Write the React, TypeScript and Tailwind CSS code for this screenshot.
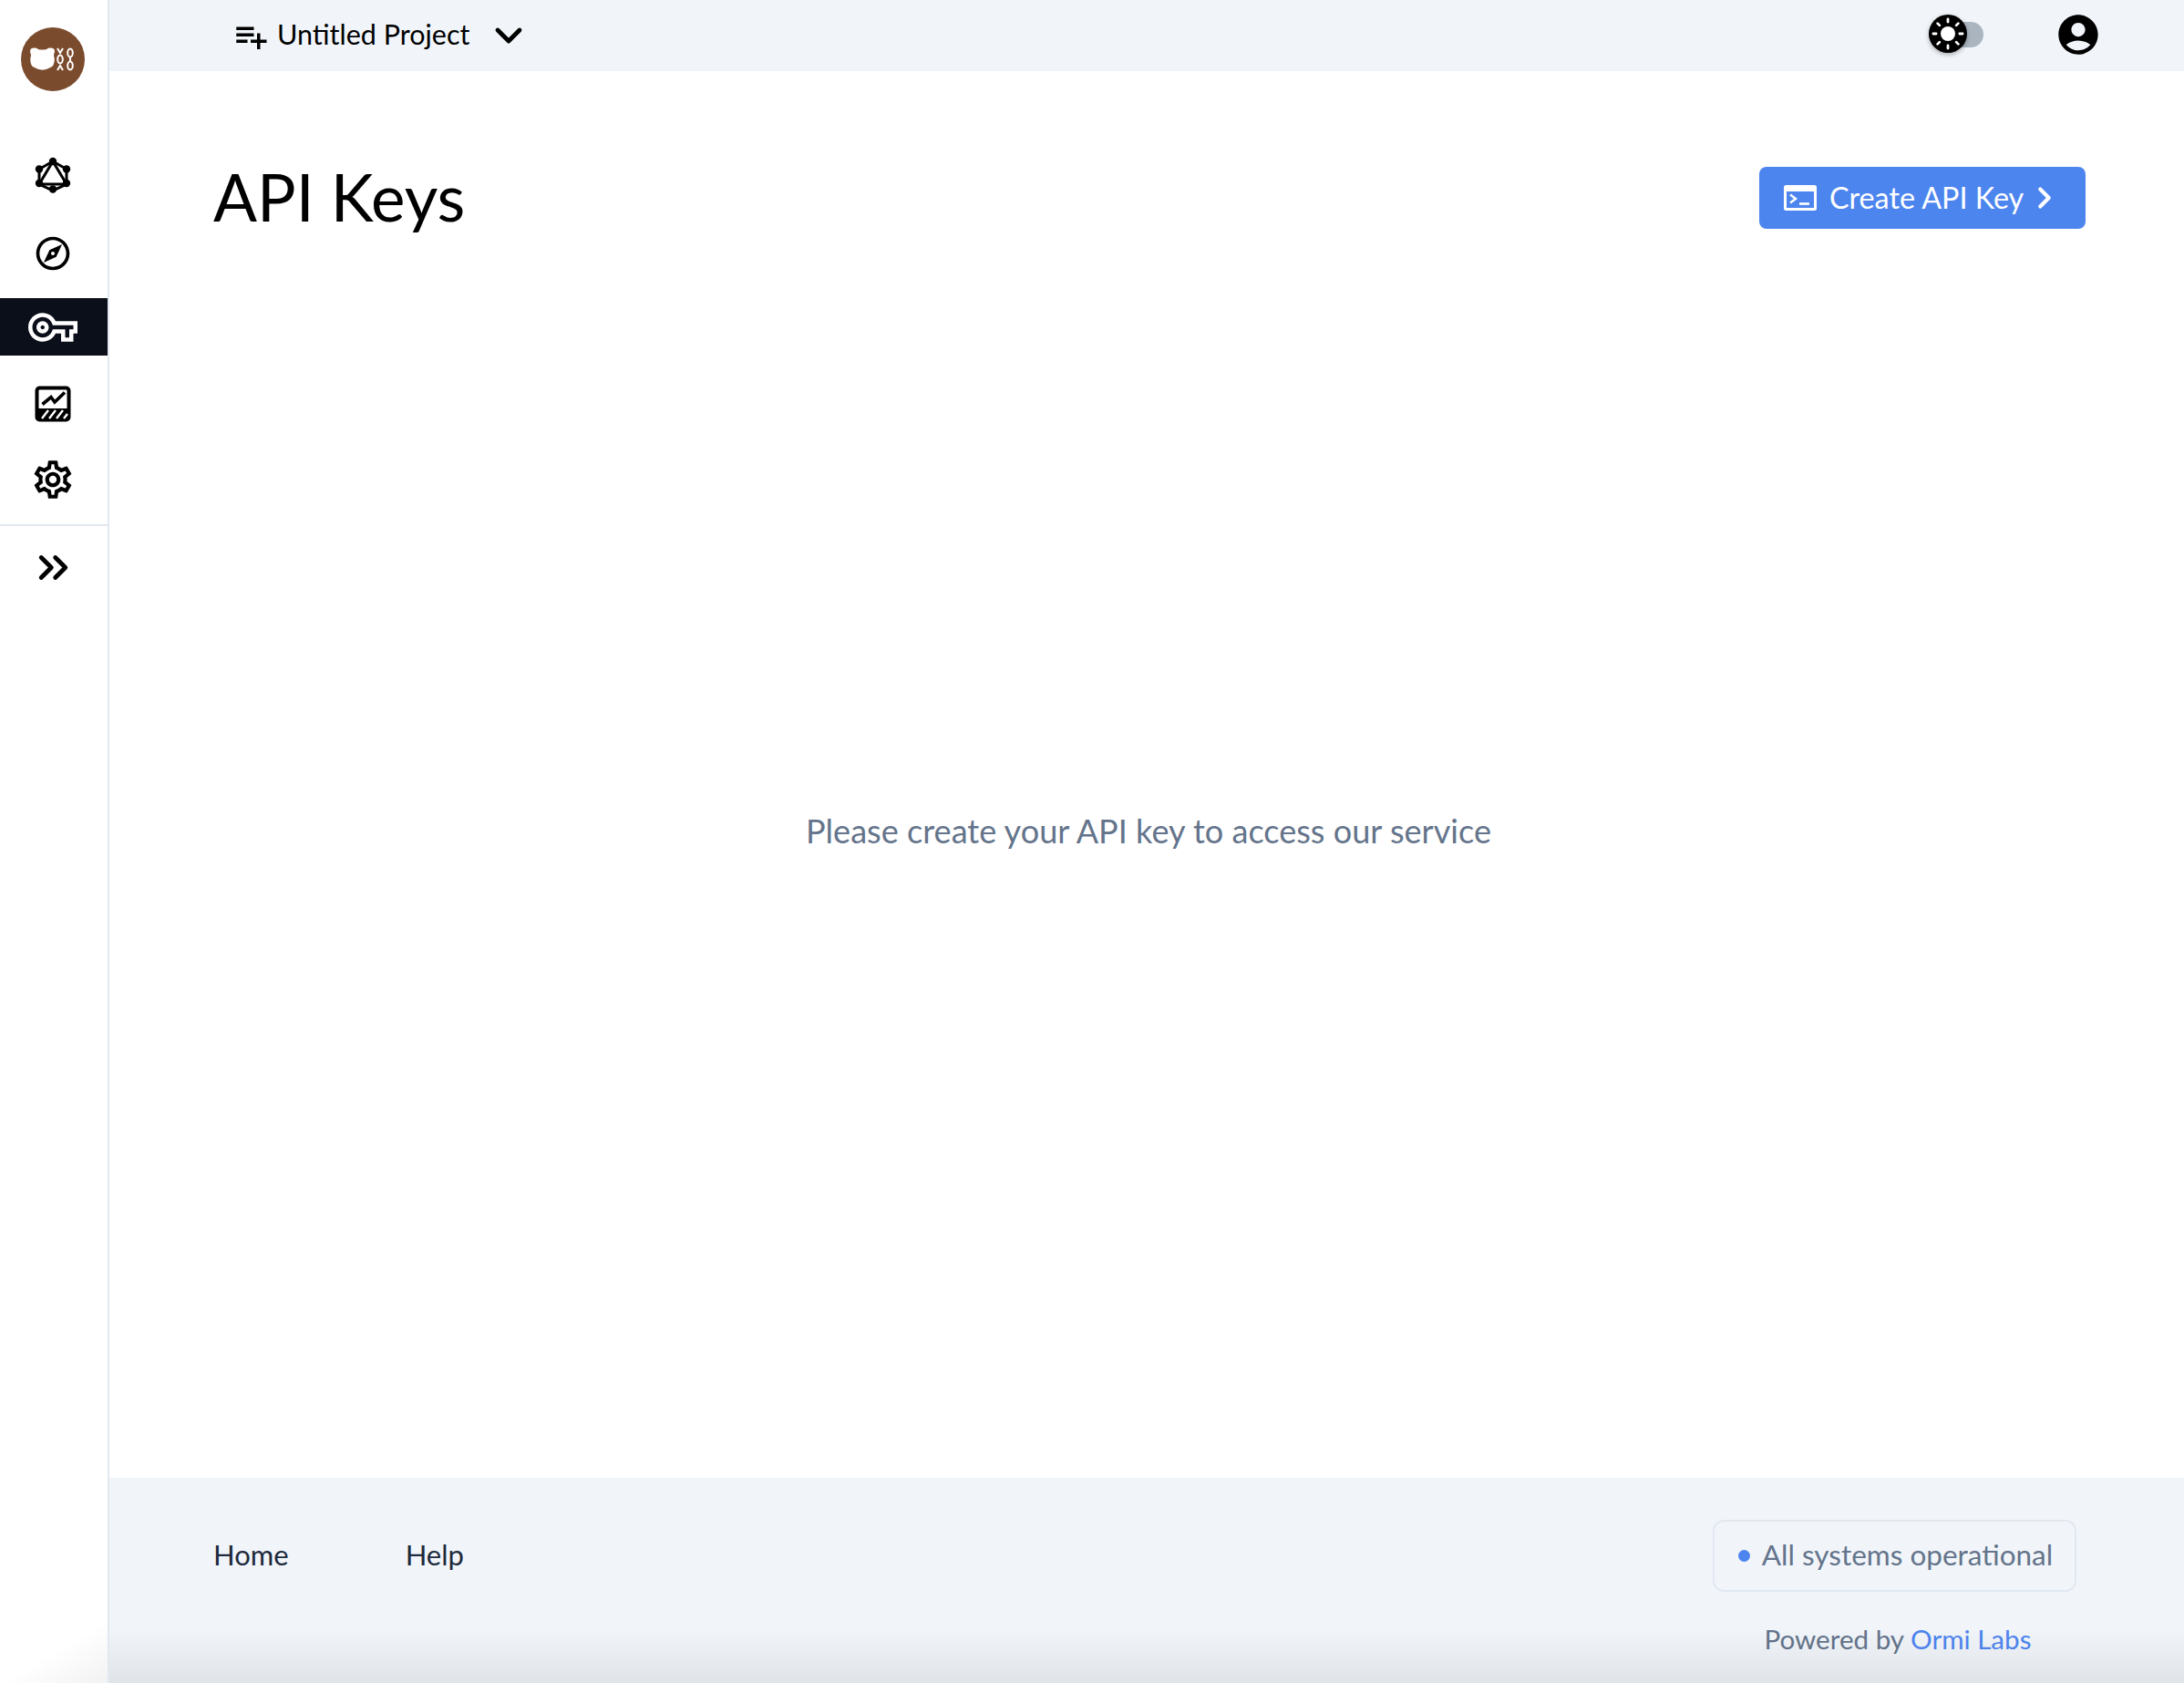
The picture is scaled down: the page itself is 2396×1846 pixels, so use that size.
import { ChevronDown, ChevronRight, ChevronsRight } from "lucide-react";
import { MdAccountCircle, MdOutlineExplore, MdOutlineVpnKey, MdOutlineSettings, MdPlaylistAdd } from "react-icons/md";

function BearLogo() {
  return (
    <div className="w-[70px] h-[70px] rounded-full bg-[#7b4b2e] flex items-center justify-center">
      <svg width="50" height="26" viewBox="0 0 50 26" fill="none">
        <path d="M0 4C0 1 3 0 6 .5C8 1 9 2.500 11 2.500H16C18 2.500 19 1 21 .5C24 0 27 1 27 4C27 6 26 7 26 9C27 12 27 15 26 18C25 21.500 22 22 19 23.500C16 25 11 25 8 23.500C5 22 2 21.500 1 18C0 15 0 12 1 9C1 7 0 6 0 4Z" fill="#fff" />
        <g stroke="#fff" strokeWidth="2">
          <path d="M30 1l3 5 3-5M30 25l3-5 3 5" />
          <ellipse cx="33" cy="13" rx="2.800" ry="4.500" />
          <ellipse cx="44" cy="6" rx="2.800" ry="4.500" />
          <ellipse cx="44" cy="20" rx="2.800" ry="4.500" />
          <path d="M44 10v6" />
        </g>
      </svg>
    </div>
  );
}

function GraphIcon() {
  return (
    <svg width="40" height="40" viewBox="0 0 40 40" fill="none">
      <path d="M20 5L35 13.500V30L20 37L5 30V13.500Z" stroke="#000" strokeWidth="3" />
      <path d="M20 5L35 30H5Z" stroke="#000" strokeWidth="3" />
      <g fill="#000">
        <circle cx="20" cy="5" r="4.200" />
        <circle cx="35" cy="13.500" r="4.200" />
        <circle cx="35" cy="29" r="4.200" />
        <circle cx="20" cy="35.500" r="4.200" />
        <circle cx="5" cy="29" r="4.200" />
        <circle cx="5" cy="13.500" r="4.200" />
      </g>
    </svg>
  );
}

function ChartIcon() {
  return (
    <svg width="40" height="40" viewBox="0 0 40 40" fill="none">
      <rect x="2.500" y="2.500" width="35" height="35" rx="3" stroke="#000" strokeWidth="4" />
      <path d="M8.500 20.500L18 12.500L22 18L33 7.500" stroke="#000" strokeWidth="3.600" />
      <path d="M3 25h34v12H3z" fill="#000" />
      <path d="M8 36l7-9M16 36l7-9M24 36l7-9M32 36l4-5" stroke="#fff" strokeWidth="2.400" />
    </svg>
  );
}

function SunToggle() {
  const rays = [0, 45, 90, 135, 180, 225, 270, 315];
  return (
    <div className="relative w-[60px] h-[28px] rounded-full bg-[#abb5c0]">
      <div className="absolute left-0 top-[-8px] w-[42px] h-[42px] rounded-full bg-black shadow-[0_2px_5px_rgba(0,0,0,0.3)] flex items-center justify-center">
        <svg width="42" height="42" viewBox="0 0 42 42">
          <circle cx="21" cy="21" r="8" fill="#fff" />
          {rays.map((r) => (
            <rect key={r} x="19.600" y="3.500" width="2.800" height="6" rx="1.400" fill="#fff" transform={`rotate(${r} 21 21)`} />
          ))}
        </svg>
      </div>
    </div>
  );
}

function TerminalIcon() {
  return (
    <svg width="36" height="28" viewBox="0 0 36 28" fill="none">
      <rect x="0" y="0" width="36" height="28" rx="2.500" fill="#fff" />
      <rect x="3" y="7" width="30" height="18" fill="#4d85ef" />
      <path d="M7 10.500l6 4.500-6 4.500" stroke="#fff" strokeWidth="2.400" />
      <path d="M17 20.500h11" stroke="#fff" strokeWidth="2.600" />
    </svg>
  );
}

export default function App() {
  return (
    <div className="relative flex h-screen overflow-hidden bg-white text-black font-['Lato',sans-serif]">
      {/* Sidebar */}
      <aside className="w-[120px] shrink-0 border-r-2 border-[#e2e8f0] flex flex-col pt-[30px]">
        <div className="flex justify-center pr-[2px]">
          <BearLogo />
        </div>
        <div className="mt-[50px] h-[84px] flex items-center justify-center pr-[2px]">
          <GraphIcon />
        </div>
        <div className="h-[93px] flex items-center justify-center pb-[5px] pr-[2px]">
          <MdOutlineExplore size={44} />
        </div>
        <div className="h-[63px] bg-[#0b0f19] text-white flex items-center justify-center pr-[2px]">
          <MdOutlineVpnKey size={54} />
        </div>
        <div className="h-[106px] flex items-center justify-center pr-[2px]">
          <ChartIcon />
        </div>
        <div className="h-[60px] flex items-center justify-center pr-[2px]">
          <MdOutlineSettings size={50} />
        </div>
        <div className="border-t-2 border-[#e2e8f0] mt-[19px] h-[93px] flex items-center justify-center pr-[2px]">
          <ChevronsRight size={53} strokeWidth={2.200} />
        </div>
      </aside>

      <div className="flex-1 flex flex-col min-w-0">
        {/* Top bar */}
        <header className="h-[78px] shrink-0 bg-[#f1f5fa] flex items-center justify-between pl-[134px] pr-[90px]">
          <div className="flex items-center text-[30.500px]">
            <MdPlaylistAdd size={42} className="mt-[2px]" />
            <span className="ml-[8px] mb-[3px]">Untitled Project</span>
            <ChevronDown className="ml-[19px]" size={48} strokeWidth={2.400} />
          </div>
          <div className="flex items-center gap-[78px] pb-[3px]">
            <SunToggle />
            <MdAccountCircle size={52} />
          </div>
        </header>

        {/* Page content */}
        <main className="flex-1 flex flex-col pl-[114px] pt-[105px] pr-[108px]">
          <div className="flex items-center justify-between">
            <h1 className="text-[71px] leading-[68px] -translate-y-px">API Keys</h1>
            <button className="h-[68px] w-[358px] rounded-lg bg-[#4d85ef] text-white text-[32.300px] flex items-center pl-[27px]">
              <TerminalIcon />
              <span className="ml-[14px]">Create API Key</span>
              <ChevronRight className="ml-[4px]" size={38} strokeWidth={2.600} />
            </button>
          </div>
          <div className="flex-1 flex items-center justify-center pr-[2px] pb-[50px]">
            <p className="text-[36.100px] text-[#64748b]">Please create your API key to access our service</p>
          </div>
        </main>

        {/* Footer */}
        <footer className="h-[225px] shrink-0 bg-[#f1f5fa] flex justify-between pl-[114px] pr-[118px] pt-[46px]">
          <nav className="flex items-center gap-[128px] h-[79px] pb-[3px] text-[31px] text-[#1e293b]">
            <span>Home</span>
            <span>Help</span>
          </nav>
          <div className="flex flex-col items-center">
            <div className="h-[79px] w-[399px] rounded-xl border-2 border-[#e2e8f0] flex items-center justify-center gap-[13px] pl-[2px] text-[31.500px] text-[#64748b]">
              <span className="w-[13px] h-[13px] rounded-full bg-[#4d85ef]" />
              <span className="mb-[2px]">All systems operational</span>
            </div>
            <p className="mt-[30px] text-[29.600px] text-[#64748b] pl-[7px]">
              Powered by <span className="text-[#4d85ef]">Ormi Labs</span>
            </p>
          </div>
        </footer>
      </div>

      {/* bottom edge shading */}
      <div className="absolute left-[120px] right-0 bottom-0 h-[60px] pointer-events-none bg-gradient-to-t from-[rgba(0,0,0,0.07)] to-transparent" />
      <div className="absolute left-0 w-[118px] bottom-0 h-[70px] pointer-events-none bg-gradient-to-br from-transparent via-transparent to-[rgba(0,0,0,0.05)]" />
    </div>
  );
}
